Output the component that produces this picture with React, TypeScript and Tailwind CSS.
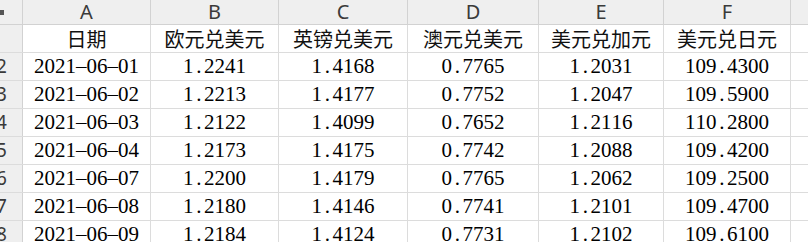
import React from "react";

const colW = ["w-[128px]", "w-[128px]", "w-[129px]", "w-[131px]", "w-[125px]", "w-[127px]"];
const letters = ["A", "B", "C", "D", "E", "F"];
const titles = ["日期", "欧元兑美元", "英镑兑美元", "澳元兑美元", "美元兑加元", "美元兑日元"];
const data = [
  ["2021-06-01", "1.2241", "1.4168", "0.7765", "1.2031", "109.4300"],
  ["2021-06-02", "1.2213", "1.4177", "0.7752", "1.2047", "109.5900"],
  ["2021-06-03", "1.2122", "1.4099", "0.7652", "1.2116", "110.2800"],
  ["2021-06-04", "1.2173", "1.4175", "0.7742", "1.2088", "109.4200"],
  ["2021-06-07", "1.2200", "1.4179", "0.7765", "1.2062", "109.2500"],
  ["2021-06-08", "1.2180", "1.4146", "0.7741", "1.2101", "109.4700"],
  ["2021-06-09", "1.2184", "1.4124", "0.7731", "1.2102", "109.6100"],
];

function Mono({ text }: { text: string }) {
  return (
    <span className="inline-flex">
      {text.split("").map((c, i) => (
        <span key={i} className="inline-block w-[0.5em] text-center">
          {c === "-" ? "\u2013" : c}
        </span>
      ))}
    </span>
  );
}

export default function App() {
  return (
    <div className="w-[808px] h-[242px] overflow-hidden bg-white text-black">
      <div className="flex h-[25px] bg-[#efefef] border-b border-[#d2d2d2]">
        <div className="w-[23px] shrink-0 border-r border-[#d2d2d2] relative overflow-hidden">
          <div className="absolute left-0 top-[10px] w-[4px] h-[5px] bg-[#555]" />
        </div>
        {letters.map((l, i) => (
          <div
            key={l}
            className={`${colW[i]} shrink-0 border-r border-[#d2d2d2] flex items-center justify-center text-[20px] text-[#3a3a3a] font-['Noto_Sans','Liberation_Sans',sans-serif] leading-[24px]`}
          >
            {l}
          </div>
        ))}
        <div className="flex-1" />
      </div>
      <div className="flex h-[28px] border-b border-[#dcdcdc]">
        <div className="w-[23px] shrink-0 bg-[#efefef] border-r border-[#d2d2d2]" />
        {titles.map((t, i) => (
          <div
            key={t}
            className={`${colW[i]} shrink-0 border-r border-[#dcdcdc] flex items-center justify-center text-[20px] font-['Noto_Sans_CJK_SC',sans-serif] leading-[27px] text-[#111]`}
          >
            {t}
          </div>
        ))}
        <div className="flex-1" />
      </div>
      {data.map((row, r) => (
        <div key={r} className="flex h-[28px] border-b border-[#dcdcdc]">
          <div className="w-[23px] shrink-0 bg-[#efefef] border-r border-[#d2d2d2] overflow-hidden flex items-center">
            <span className="-ml-[4px] text-[19px] leading-[27px] text-[#3a3a3a] font-['Noto_Sans','Liberation_Sans',sans-serif]">
              {r + 2}
            </span>
          </div>
          {row.map((v, i) => (
            <div
              key={i}
              className={`${colW[i]} shrink-0 border-r border-[#dcdcdc] flex items-center justify-center text-[21px] font-['Liberation_Serif',serif] leading-[27px]`}
            >
              <Mono text={v} />
            </div>
          ))}
          <div className="flex-1" />
        </div>
      ))}
    </div>
  );
}
